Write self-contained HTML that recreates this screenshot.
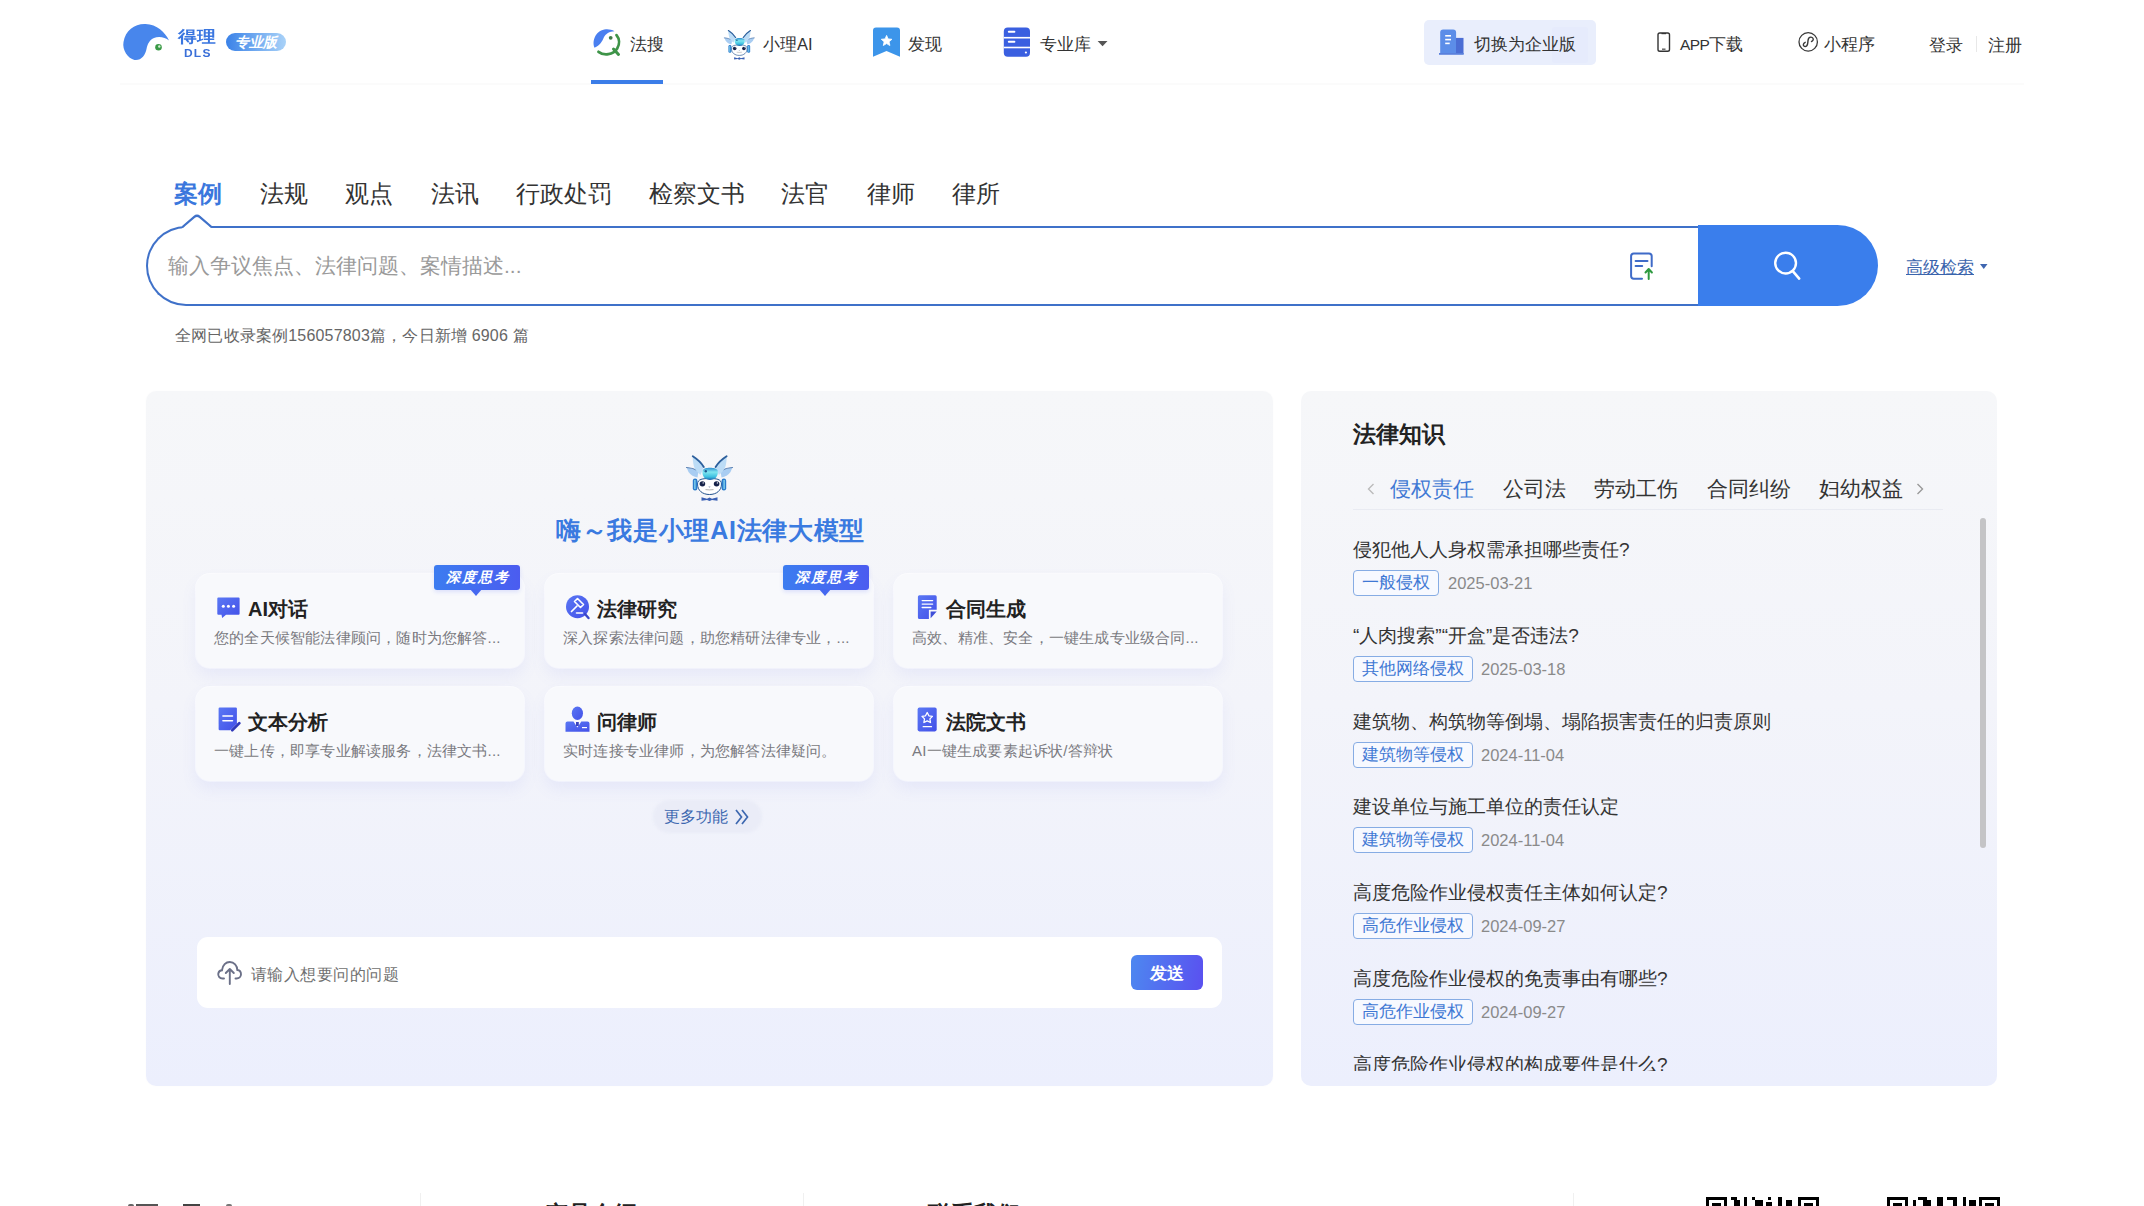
<!DOCTYPE html>
<html><head><meta charset="utf-8">
<style>
*{margin:0;padding:0;box-sizing:border-box}
html,body{width:2144px;height:1206px;overflow:hidden;background:#fff;font-family:"Liberation Sans",sans-serif;color:#333}
.a{position:absolute;white-space:nowrap}
svg.a{overflow:visible}
.nav{font-size:16.5px;color:#333;line-height:20px}
.tab{font-size:24px;color:#333;line-height:30px}
.card{position:absolute;width:328px;height:94px;border-radius:14px;background:#f8f9fc;box-shadow:0 8px 16px rgba(110,120,230,0.09),0 0 0 1px rgba(255,255,255,0.7)}
.ct{position:absolute;left:52px;top:22px;font-size:20px;font-weight:bold;color:#222;line-height:26px}
.cd{position:absolute;left:18px;top:54px;font-size:15px;color:#7a7a80;line-height:20px;letter-spacing:0.2px}
.ci{position:absolute;left:0;top:0;overflow:visible}
.badge{position:absolute;left:238px;top:-9px;width:86px;height:25px;border-radius:3px;background:linear-gradient(90deg,#3c7cf0,#4b5cf0);color:#fff;font-size:14px;font-weight:bold;font-style:italic;text-align:center;line-height:25px;letter-spacing:2px;text-indent:1px;box-shadow:0 2px 4px rgba(70,90,240,0.15)}
.badge:after{content:"";position:absolute;left:36px;bottom:-6px;border-left:6px solid transparent;border-right:6px solid transparent;border-top:7px solid #4568f0}
.kt{position:absolute;left:52px;font-size:19px;color:#333;line-height:24px}
.tag{position:absolute;left:52px;height:26px;border:1px solid #86ace4;border-radius:4px;color:#3f78d4;font-size:17px;font-weight:500;line-height:24px;padding:0 8px;background:#f7f9ff}
.dt{position:absolute;font-size:16.5px;color:#8a8a8a;line-height:20px}
</style></head>
<body>
<svg width="0" height="0" style="position:absolute"><defs><linearGradient id="gem" x1="0" y1="0" x2="0" y2="1"><stop offset="0" stop-color="#2f8fd0"/><stop offset="0.35" stop-color="#7fe6f0"/><stop offset="0.75" stop-color="#3cbfe0"/><stop offset="1" stop-color="#1c62b0"/></linearGradient><g id="masc">
  
  <path d="M16.5,27.5 C20,27.5 25,29 28.5,31 L27.5,37.5 C24,37 20.5,35 18.5,32 Z" fill="#a9cdf2"/>
  <path d="M16.5,27.5 C20,27.5 25,29 28.5,31" fill="none" stroke="#5a7fb0" stroke-width="1.2" stroke-linecap="round"/>
  <path d="M62.5,27.5 C59,27.5 54,29 50.5,31 L51.5,37.5 C55,37 58.5,35 60.5,32 Z" fill="#a9cdf2"/>
  <path d="M62.5,27.5 C59,27.5 54,29 50.5,31" fill="none" stroke="#5a7fb0" stroke-width="1.2" stroke-linecap="round"/>
  <path d="M22.8,16.3 C27,19 31,22.5 33.8,27 L30.5,35 C27,32 24.5,29 23.8,26 C23,22.5 22.6,19 22.8,16.3 Z" fill="#bcdcf6"/>
  <path d="M22.8,16.3 C27,19 31,22.5 33.8,27" fill="none" stroke="#2c5f9c" stroke-width="1.9" stroke-linecap="round"/>
  <path d="M56.6,16.3 C52.4,19 48.4,22.5 45.6,27 L48.9,35 C52.4,32 54.9,29 55.6,26 C56.4,22.5 56.8,19 56.6,16.3 Z" fill="#bcdcf6"/>
  <path d="M56.6,16.3 C52.4,19 48.4,22.5 45.6,27" fill="none" stroke="#2c5f9c" stroke-width="1.9" stroke-linecap="round"/>
  <path d="M27.5,44 C27.5,39 33,38.5 39.5,38.5 C46,38.5 51.5,39 51.5,44 C51.5,50.5 46.5,54.5 39.5,54.5 C32.5,54.5 27.5,50.5 27.5,44 Z" fill="#fff" stroke="#22528e" stroke-width="1"/>
  <rect x="22.8" y="38.5" width="4.6" height="12" rx="2.2" fill="#2b7ccc"/>
  <rect x="24.3" y="40" width="1.2" height="9" fill="#8fe0f4"/>
  <rect x="51.6" y="38.5" width="4.6" height="12" rx="2.2" fill="#2b7ccc"/>
  <rect x="53.5" y="40" width="1.2" height="9" fill="#8fe0f4"/>
  <path d="M32.5,31 C33,28.5 36,27.8 40,27.8 C44,27.8 47,28.5 47.8,31 C48.5,36 45,40 40,40 C35,40 31.8,36 32.5,31 Z" fill="url(#gem)"/>
  <circle cx="35.8" cy="31.3" r="1.2" fill="#1e5a90"/>
  <ellipse cx="32.4" cy="43.8" rx="2.8" ry="2.6" fill="#16224a"/>
  <ellipse cx="46.6" cy="43.8" rx="2.8" ry="2.6" fill="#16224a"/>
  <circle cx="33.2" cy="42.9" r="0.7" fill="#fff"/><circle cx="47.4" cy="42.9" r="0.7" fill="#fff"/>
  <path d="M38.3,46.6 L40.7,46.6 L39.5,47.8 Z" fill="#8a9ab8"/>
  <path d="M35.5,49.6 Q39.5,50.2 43.5,49.6" fill="none" stroke="#666" stroke-width="0.5"/>
  <path d="M31.5,57.3 L37,58.8 L39.5,57.5 L42,58.8 L47.5,57.3 L47.5,60.8 L42,60 L39.5,61 L37,60 L31.5,60.8 Z" fill="#3a60b4"/>
</g></defs></svg>
<!-- header line -->
<div class="a" style="left:120px;top:83px;width:1904px;height:2px;background:#fbfbfb"></div>

<!-- logo -->
<svg class="a" style="left:115px;top:15px" width="60" height="50" viewBox="0 0 60 50">
  <path d="M10.5,45 C4,43.5 -2,35 -0.5,27 C1.5,15 11,8.5 21.5,9 C33,9.5 41,17 45,25.5 C41.5,22.5 35,21 30,23 C25.5,25 23.5,29 22.5,34 C21.5,40 17,46 10.5,45 Z" fill="#4886ec" transform="translate(9,0)"/>
  <circle cx="43.5" cy="32.3" r="3.3" fill="#3a9a46"/>
  <circle cx="44.3" cy="31.5" r="1.2" fill="#d8f0d8"/>
</svg>
<div class="a" style="left:178px;top:29px;font-size:16px;font-weight:900;color:#3a76e0;line-height:16px;transform:scaleX(1.17);transform-origin:0 0">得理</div>
<div class="a" style="left:184px;top:47.5px;font-size:12px;font-weight:bold;color:#3a6fd8;line-height:12px;letter-spacing:1.2px;transform:scaleY(0.85);transform-origin:0 0">DLS</div>
<div class="a" style="left:226px;top:33px;width:60px;height:18px;border-radius:9px;background:linear-gradient(90deg,#3a82e8,#a9d2f8);color:#fff;font-size:14px;font-style:italic;font-weight:900;text-align:center;line-height:18px">专业版</div>

<!-- nav: 法搜 -->
<svg class="a" style="left:590px;top:26px" width="34" height="32" viewBox="590 26 34 32">
  <path d="M594.5,47.8 C591.5,40 596.5,30 606,29.3 C609,29.1 612,29.8 614.5,31.2 C609.5,31.5 605.5,33.5 603.8,37.5 C602.2,41.3 600,45.5 594.5,47.8 Z" fill="#4a7ff0"/>
  <path d="M598.5,51.8 C604,56 613,55 617.2,48.5 C619.8,44.2 619.5,38.8 616.5,35.2" fill="none" stroke="#3e9448" stroke-width="2.8" stroke-linecap="round"/>
  <path d="M613.5,49 L618.5,54.5" stroke="#3e9448" stroke-width="3" stroke-linecap="round"/>
  <circle cx="610.7" cy="37.8" r="1.9" fill="#3e7a48"/>
</svg>
<div class="a nav" style="left:630px;top:34px">法搜</div>
<div class="a" style="left:591px;top:80px;width:72px;height:4px;background:#3b7de8"></div>

<!-- nav: 小理AI -->
<svg class="a" style="left:723.6px;top:29.7px" width="30.6" height="30" viewBox="16 15.5 47 46"><use href="#masc"/></svg>
<div class="a nav" style="left:763px;top:34px">小理AI</div>

<!-- nav: 发现 -->
<svg class="a" style="left:870px;top:25px" width="34" height="34" viewBox="870 25 34 34">
  <path d="M876,27.6 L897,27.6 Q900,27.6 900,30.6 L900,56.7 L886.5,51 L873,56.7 L873,30.6 Q873,27.6 876,27.6 Z" fill="#3c95ea"/>
  <path d="M886.60,35.40 L888.13,38.90 L891.93,39.27 L889.07,41.80 L889.89,45.53 L886.60,43.60 L883.31,45.53 L884.13,41.80 L881.27,39.27 L885.07,38.90 Z" fill="#fff" stroke="#fff" stroke-width="0.8" stroke-linejoin="round"/>
</svg>
<div class="a nav" style="left:908px;top:34px">发现</div>

<!-- nav: 专业库 -->
<svg class="a" style="left:1000px;top:25px" width="34" height="34" viewBox="1000 25 34 34">
  <rect x="1003.8" y="27.6" width="26.2" height="29.1" rx="4" fill="#3a5fe0"/>
  <rect x="1003.8" y="36.9" width="26.2" height="1.6" fill="#fff"/>
  <rect x="1003.8" y="46.7" width="26.2" height="1.6" fill="#fff"/>
  <rect x="1007.8" y="30.8" width="7.6" height="2" rx="1" fill="#fff"/>
  <rect x="1007.8" y="40.8" width="7.6" height="2" rx="1" fill="#fff"/>
  <circle cx="1025.9" cy="52.5" r="1.1" fill="#fff"/>
</svg>
<div class="a nav" style="left:1040px;top:34px">专业库</div>
<svg class="a" style="left:1096px;top:40px" width="14" height="8" viewBox="0 0 14 8"><path d="M1.6,1 L11.5,1 L6.55,6.2 Z" fill="#555"/></svg>

<!-- 切换为企业版 -->
<div class="a" style="left:1424px;top:20px;width:172px;height:45px;border-radius:5px;background:#e9eefc"></div>
<div class="a" style="left:1552px;top:27px;width:36px;height:36px;border-radius:3px;background:#e4e9fb;opacity:0.6"></div>
<svg class="a" style="left:1436px;top:27px" width="30" height="30" viewBox="1436 27 30 30">
  <path d="M1440.2,54 L1440.2,32.5 Q1440.2,29.5 1443.2,29.5 L1453.1,29.5 Q1456.1,29.5 1456.1,32.5 L1456.1,54 Z" fill="#5c8de8"/>
  <rect x="1456" y="37.9" width="7.5" height="16.1" fill="#4b6dd4"/>
  <rect x="1439" y="53" width="24.7" height="1.8" fill="#5a80dc"/>
  <rect x="1445.2" y="35" width="5.8" height="1.6" fill="#fff"/>
  <rect x="1445.2" y="38.8" width="5.8" height="1.6" fill="#fff"/>
  <rect x="1445.2" y="42.6" width="4.5" height="1.6" fill="#fff"/>
</svg>
<div class="a nav" style="left:1474px;top:34px">切换为企业版</div>

<!-- APP下载 -->
<svg class="a" style="left:1655px;top:30px" width="18" height="24" viewBox="1655 30 18 24">
  <rect x="1658" y="33" width="11.5" height="18.2" rx="1.8" fill="none" stroke="#333" stroke-width="1.4"/>
  <rect x="1661.5" y="33" width="4.5" height="1.2" fill="#333"/>
  <rect x="1662" y="48.6" width="3.5" height="1.1" fill="#333"/>
</svg>
<div class="a nav" style="left:1680px;top:34px"><span style="font-size:15.5px;letter-spacing:-0.6px">APP</span>下载</div>

<!-- 小程序 -->
<svg class="a" style="left:1795px;top:29px" width="26" height="26" viewBox="1795 29 26 26">
  <circle cx="1808.2" cy="41.9" r="9.2" fill="none" stroke="#3a3a3a" stroke-width="1.3"/>
  <path d="M1805.2,42.3 C1803.2,43.2 1802.6,45.8 1804.4,46.4 C1806.4,47 1807.6,45.2 1807.8,42.6 L1808,40.6 C1808.2,38.2 1809.4,37 1811,37.1 C1812.8,37.2 1813.8,39 1812.9,40.4 C1812.5,41 1812,41.3 1811.5,41.5" fill="none" stroke="#3a3a3a" stroke-width="1.4" stroke-linecap="round"/>
</svg>
<div class="a nav" style="left:1824px;top:34px">小程序</div>
<div class="a nav" style="left:1929px;top:35px">登录</div>
<div class="a" style="left:1976px;top:36px;width:1px;height:16px;background:#e8e8e8"></div>
<div class="a nav" style="left:1988px;top:35px">注册</div>

<!-- tabs -->
<div class="a tab" style="left:174px;top:179px;color:#3a77dd;font-weight:bold">案例</div>
<div class="a tab" style="left:260px;top:179px">法规</div>
<div class="a tab" style="left:345px;top:179px">观点</div>
<div class="a tab" style="left:431px;top:179px">法讯</div>
<div class="a tab" style="left:516px;top:179px">行政处罚</div>
<div class="a tab" style="left:649px;top:179px">检察文书</div>
<div class="a tab" style="left:781px;top:179px">法官</div>
<div class="a tab" style="left:867px;top:179px">律师</div>
<div class="a tab" style="left:952px;top:179px">律所</div>

<!-- search box -->
<div class="a" style="left:146px;top:225.6px;width:1600px;height:80.4px;border:2.5px solid #3f71c9;border-right:none;border-radius:40px 0 0 40px;background:#fff"></div>
<div class="a" style="left:1698px;top:225px;width:180px;height:81px;border-radius:0 40.5px 40.5px 0;background:#3a7eec"></div>
<svg class="a" style="left:170px;top:205px" width="60" height="30" viewBox="170 205 60 30">
  <path d="M181,229.5 L197,215 L213,229.5 Z" fill="#fff"/>
  <path d="M182.5,227 L194.3,216.9 Q197,214.6 199.7,216.9 L211.5,227" fill="none" stroke="#3f71c9" stroke-width="2.2" stroke-linejoin="round"/>
</svg>
<div class="a" style="left:168px;top:252px;font-size:21px;color:#9a9a9a;line-height:28px">输入争议焦点、法律问题、案情描述...</div>
<!-- upload doc icon -->
<svg class="a" style="left:1625px;top:248px" width="32" height="36" viewBox="1625 248 32 36">
  <path d="M1642,278.7 L1633.8,278.7 Q1631.1,278.7 1631.1,276 L1631.1,256.2 Q1631.1,253.5 1633.8,253.5 L1649,253.5 Q1651.7,253.5 1651.7,256.2 L1651.7,266.2" fill="none" stroke="#3f6bc8" stroke-width="2" stroke-linecap="round"/>
  <path d="M1635.6,261.1 L1647.5,261.1 M1635.6,265.9 L1642.2,265.9" stroke="#3f6bc8" stroke-width="2" stroke-linecap="round"/>
  <path d="M1648.7,279 L1648.7,269.5 M1645.5,272.5 L1648.7,269 L1651.9,272.5" fill="none" stroke="#2e9a40" stroke-width="2" stroke-linecap="round" stroke-linejoin="round"/>
</svg>
<!-- search icon -->
<svg class="a" style="left:1766px;top:244px" width="40" height="40" viewBox="1766 244 40 40">
  <circle cx="1785.6" cy="263.1" r="10.4" fill="none" stroke="#fff" stroke-width="2.4"/>
  <path d="M1793.2,271.6 L1799.2,278.6" stroke="#fff" stroke-width="2.6" stroke-linecap="round"/>
</svg>
<div class="a" style="left:1906px;top:257px;font-size:17px;color:#3a64ac;line-height:22px;text-decoration:underline;text-underline-offset:1px">高级检索</div>
<svg class="a" style="left:1978px;top:262px" width="12" height="10" viewBox="0 0 12 10"><path d="M2,2 L9.5,2 L5.75,7 Z" fill="#3f66b0"/></svg>
<div class="a" style="left:175px;top:326px;font-size:16px;color:#666;line-height:20px;letter-spacing:0.18px">全网已收录案例156057803篇，今日新增 6906 篇</div>

<!-- left panel -->
<div class="a" style="left:146px;top:391px;width:1127px;height:695px;border-radius:10px;background:linear-gradient(180deg,#f6f7f9 0%,#f3f4fa 45%,#eceffd 100%);box-shadow:0 0 3px rgba(0,0,0,0.02)"></div>
<!-- mascot -->
<svg class="a" style="left:670px;top:440px" width="80" height="70" viewBox="0 0 80 70"><use href="#masc"/></svg>
<div class="a" style="left:556px;top:512px;font-size:25px;font-weight:bold;color:#3a7ae0;line-height:36px;letter-spacing:0.7px">嗨～我是小理AI法律大模型</div>

<!-- cards -->
<div class="card" style="left:196px;top:574px">
  <svg class="ci" width="60" height="60" viewBox="196 574 60 60">
    <defs><linearGradient id="g1" x1="0" y1="0" x2="1" y2="1"><stop offset="0" stop-color="#5a78f4"/><stop offset="1" stop-color="#4350e8"/></linearGradient></defs>
    <path d="M218.3,597.5 L238.6,597.5 Q239.6,597.5 239.6,598.5 L239.6,613.7 Q239.6,614.7 238.6,614.7 L226,614.7 L222.2,618 L221.5,614.7 L218.3,614.7 Q217.3,614.7 217.3,613.7 L217.3,598.5 Q217.3,597.5 218.3,597.5 Z" fill="url(#g1)"/>
    <circle cx="223.3" cy="606.3" r="1.5" fill="#fff"/><circle cx="228.4" cy="606.3" r="1.5" fill="#fff"/><circle cx="233.6" cy="606.3" r="1.5" fill="#fff"/>
  </svg>
  <div class="ct">AI对话</div><div class="cd">您的全天候智能法律顾问，随时为您解答...</div><div class="badge">深度思考</div></div>
<div class="card" style="left:545px;top:574px">
  <svg class="ci" width="60" height="60" viewBox="545 574 60 60">
    <circle cx="577.5" cy="606.7" r="11.5" fill="url(#g1)"/>
    <path d="M585,614 L588.5,618" stroke="#3a46c8" stroke-width="2.4" stroke-linecap="round"/>
    <path d="M574.5,601.5 L577.5,598.5 L583.5,604.5 L580.5,607.5 Z" fill="none" stroke="#fff" stroke-width="1.6" stroke-linejoin="round"/>
    <path d="M577,606 L571.5,611.5" stroke="#fff" stroke-width="1.7" stroke-linecap="round"/>
    <path d="M576.5,613 L582.5,613" stroke="#fff" stroke-width="1.6" stroke-linecap="round"/>
  </svg>
  <div class="ct">法律研究</div><div class="cd">深入探索法律问题，助您精研法律专业，...</div><div class="badge">深度思考</div></div>
<div class="card" style="left:894px;top:574px">
  <svg class="ci" width="60" height="60" viewBox="894 574 60 60">
    <path d="M919.4,595.2 L935.2,595.2 Q936.7,595.2 936.7,596.7 L936.7,609.8 L928.9,609.8 L928.9,618.9 L919.4,618.9 Q917.9,618.9 917.9,617.4 L917.9,596.7 Q917.9,595.2 919.4,595.2 Z" fill="url(#g1)"/>
    <path d="M930.6,611.5 L936.7,611.5 L930.6,618.3 Z" fill="#3f4fd8"/>
    <path d="M922.2,600.6 L932.6,600.6 M922.2,604.1 L932.6,604.1 M922.2,607.5 L930.8,607.5" stroke="#fff" stroke-width="1.4" stroke-linecap="round"/>
  </svg>
  <div class="ct">合同生成</div><div class="cd">高效、精准、安全，一键生成专业级合同...</div></div>
<div class="card" style="left:196px;top:687px">
  <svg class="ci" width="60" height="60" viewBox="196 687 60 60">
    <path d="M219.8,707.6 L235.7,707.6 Q236.9,707.6 236.9,708.8 L236.9,723.5 L230.2,730.2 L219.8,730.2 Q218.6,730.2 218.6,729 L218.6,708.8 Q218.6,707.6 219.8,707.6 Z" fill="url(#g1)"/>
    <path d="M222.9,715.9 L232.5,715.9 M222.9,720.7 L232.5,720.7" stroke="#fff" stroke-width="1.5" stroke-linecap="round"/>
    <path d="M232.3,730.3 L239.3,723.3" stroke="#3038b8" stroke-width="2.8" stroke-linecap="round"/>
    <path d="M233,731.8 L240.8,724" stroke="#f8f9fc" stroke-width="0.6"/>
  </svg>
  <div class="ct">文本分析</div><div class="cd">一键上传，即享专业解读服务，法律文书...</div></div>
<div class="card" style="left:545px;top:687px">
  <svg class="ci" width="60" height="60" viewBox="545 687 60 60">
    <ellipse cx="577.4" cy="713.3" rx="5.6" ry="6.8" fill="url(#g1)"/>
    <path d="M567.5,721.6 L573.5,721.6 L577.4,727.5 L581.3,721.6 L587.5,721.6 Q589.5,721.6 589.5,723.6 L589.5,731.8 L565.5,731.8 L565.5,723.6 Q565.5,721.6 567.5,721.6 Z" fill="url(#g1)"/>
    <rect x="576" y="722" width="2.8" height="4" fill="#3a44c0"/>
    <rect x="582" y="727" width="5" height="1.2" fill="#fff"/>
  </svg>
  <div class="ct">问律师</div><div class="cd">实时连接专业律师，为您解答法律疑问。</div></div>
<div class="card" style="left:894px;top:687px">
  <svg class="ci" width="60" height="60" viewBox="894 687 60 60">
    <rect x="917.6" y="707.6" width="19.1" height="23.8" rx="1.8" fill="url(#g1)"/>
    <path d="M927.2,712.5 L928.9,715.8 L932.4,716.4 L929.9,718.9 L930.5,722.5 L927.2,720.8 L923.9,722.5 L924.5,718.9 L922,716.4 L925.5,715.8 Z" fill="none" stroke="#fff" stroke-width="1.3" stroke-linejoin="round"/>
    <path d="M923.2,726.7 L931.5,726.7" stroke="#fff" stroke-width="1.3" stroke-linecap="round"/>
  </svg>
  <div class="ct">法院文书</div><div class="cd">AI一键生成要素起诉状/答辩状</div></div>

<div class="a" style="left:653px;top:800px;width:109px;height:33px;border-radius:16px;background:#eaecf7;filter:blur(1px)"></div>
<div class="a" style="left:664px;top:806px;font-size:16px;color:#3d68b0;line-height:22px">更多功能</div>
<svg class="a" style="left:733px;top:806px" width="20" height="22" viewBox="733 806 20 22">
  <path d="M736,810 L741.5,817 L736,824 M742,810 L747.5,817 L742,824" fill="none" stroke="#3d68b0" stroke-width="1.7" stroke-linejoin="miter"/>
</svg>

<!-- input -->
<div class="a" style="left:197px;top:937px;width:1025px;height:71px;border-radius:11px;background:#fff"></div>
<svg class="a" style="left:214px;top:957px" width="32" height="32" viewBox="214 957 32 32">
  <path d="M224,978.5 L222.5,978.5 C219.5,978.5 217.8,976 218.3,973.5 C218.7,971.5 220.2,970.2 222,970.2 C222.5,965 226,962 229.8,962 C234,962 237.3,965.5 237.3,970 C239.5,970.3 241,972 241,974.3 C241,976.8 239,978.5 236.5,978.5 L235.5,978.5" fill="none" stroke="#6b7088" stroke-width="1.9" stroke-linecap="round"/>
  <path d="M229.8,984 L229.8,969 M225.8,973 L229.8,969 L233.8,973" fill="none" stroke="#6b7088" stroke-width="1.9" stroke-linecap="round" stroke-linejoin="round"/>
</svg>
<div class="a" style="left:251px;top:964px;font-size:16px;color:#707070;line-height:22px;letter-spacing:0.45px">请输入想要问的问题</div>
<div class="a" style="left:1131px;top:955px;width:72px;height:35px;border-radius:6px;background:linear-gradient(100deg,#4d88f0,#5a50f0);color:#fff;font-size:17px;font-weight:bold;text-align:center;line-height:38px">发送</div>

<!-- right panel -->
<div class="a" style="left:1301px;top:391px;width:696px;height:695px;border-radius:10px;background:linear-gradient(180deg,#f6f7f9 0%,#f3f4fa 45%,#eceffd 100%);overflow:hidden">
  <div class="a" style="left:52px;top:28px;font-size:23px;font-weight:bold;color:#222;line-height:30px">法律知识</div>
  <svg class="a" style="left:64px;top:90px" width="12" height="16" viewBox="0 0 12 16"><path d="M8.5,3 L3.5,8 L8.5,13" fill="none" stroke="#bbb" stroke-width="1.4"/></svg>
  <div class="a" style="left:89px;top:84px;font-size:21px;color:#3f78d4;line-height:28px">侵权责任</div>
  <div class="a" style="left:202px;top:84px;font-size:21px;color:#333;line-height:28px">公司法</div>
  <div class="a" style="left:293px;top:84px;font-size:21px;color:#333;line-height:28px">劳动工伤</div>
  <div class="a" style="left:406px;top:84px;font-size:21px;color:#333;line-height:28px">合同纠纷</div>
  <div class="a" style="left:518px;top:84px;font-size:21px;color:#333;line-height:28px">妇幼权益</div>
  <svg class="a" style="left:613px;top:90px" width="12" height="16" viewBox="0 0 12 16"><path d="M3.5,3 L8.5,8 L3.5,13" fill="none" stroke="#999" stroke-width="1.4"/></svg>
  <div class="a" style="left:52px;top:118px;width:590px;height:1px;background:#e9ebf2"></div>
  <div class="a" style="left:679px;top:127px;width:6px;height:330px;border-radius:3px;background:#c4c4c6"></div>

  <div class="a" style="left:0;top:120px;width:680px;height:560px;overflow:hidden">
        <div class="kt" style="top:27px">侵犯他人人身权需承担哪些责任?</div>
    <div class="tag" style="top:59px">一般侵权</div><div class="dt" style="left:147px;top:62px">2025-03-21</div>
    <div class="kt" style="top:113px">“人肉搜索”“开盒”是否违法?</div>
    <div class="tag" style="top:145px">其他网络侵权</div><div class="dt" style="left:180px;top:148px">2025-03-18</div>
    <div class="kt" style="top:199px">建筑物、构筑物等倒塌、塌陷损害责任的归责原则</div>
    <div class="tag" style="top:231px">建筑物等侵权</div><div class="dt" style="left:180px;top:234px">2024-11-04</div>
    <div class="kt" style="top:284px">建设单位与施工单位的责任认定</div>
    <div class="tag" style="top:316px">建筑物等侵权</div><div class="dt" style="left:180px;top:319px">2024-11-04</div>
    <div class="kt" style="top:370px">高度危险作业侵权责任主体如何认定?</div>
    <div class="tag" style="top:402px">高危作业侵权</div><div class="dt" style="left:180px;top:405px">2024-09-27</div>
    <div class="kt" style="top:456px">高度危险作业侵权的免责事由有哪些?</div>
    <div class="tag" style="top:488px">高危作业侵权</div><div class="dt" style="left:180px;top:491px">2024-09-27</div>
    <div class="kt" style="top:542px">高度危险作业侵权的构成要件是什么?</div>
  </div>
</div>

<!-- footer (cut off) -->
<div class="a" style="left:128px;top:1204px;width:6px;height:2px;background:#666;border-radius:2px 2px 0 0"></div><div class="a" style="left:136px;top:1204px;width:22px;height:2px;background:#555"></div><div class="a" style="left:183px;top:1204px;width:17px;height:2px;background:#444"></div><div class="a" style="left:226px;top:1204px;width:6px;height:2px;background:#777;border-radius:3px 3px 0 0"></div>
<div class="a" style="left:420px;top:1193px;width:1px;height:13px;background:#f0f0f0"></div>
<div class="a" style="left:545px;top:1199px;font-size:23px;font-weight:bold;color:#222;line-height:30px">产品介绍</div>
<div class="a" style="left:803px;top:1193px;width:1px;height:13px;background:#f0f0f0"></div>
<div class="a" style="left:928px;top:1199px;font-size:23px;font-weight:bold;color:#222;line-height:30px">联系我们</div>
<div class="a" style="left:1573px;top:1193px;width:1px;height:13px;background:#f0f0f0"></div>
<svg class="a" style="left:1706px;top:1197px" width="113" height="9" viewBox="0 0 113 9">
  <rect x="0" y="0" width="21" height="3" fill="#000"/><rect x="0" y="0" width="3" height="9" fill="#000"/><rect x="18" y="0" width="3" height="9" fill="#000"/><rect x="6" y="6" width="9" height="3" fill="#000"/>
  <rect x="92" y="0" width="21" height="3" fill="#000"/><rect x="92" y="0" width="3" height="9" fill="#000"/><rect x="110" y="0" width="3" height="9" fill="#000"/><rect x="98" y="6" width="9" height="3" fill="#000"/>
  <rect x="25" y="0" width="6" height="3" fill="#000"/><rect x="28" y="3" width="6" height="6" fill="#000"/><rect x="38" y="0" width="3" height="9" fill="#000"/><rect x="46" y="0" width="3" height="3" fill="#000"/><rect x="49" y="3" width="8" height="6" fill="#000"/><rect x="62" y="0" width="3" height="3" fill="#000"/><rect x="60" y="5" width="6" height="4" fill="#000"/><rect x="72" y="0" width="4" height="9" fill="#000"/><rect x="80" y="3" width="6" height="6" fill="#000"/>
</svg>
<svg class="a" style="left:1887px;top:1197px" width="113" height="9" viewBox="0 0 113 9">
  <rect x="0" y="0" width="21" height="3" fill="#000"/><rect x="0" y="0" width="3" height="9" fill="#000"/><rect x="18" y="0" width="3" height="9" fill="#000"/><rect x="6" y="6" width="9" height="3" fill="#000"/>
  <rect x="92" y="0" width="21" height="3" fill="#000"/><rect x="92" y="0" width="3" height="9" fill="#000"/><rect x="110" y="0" width="3" height="9" fill="#000"/><rect x="98" y="6" width="9" height="3" fill="#000"/>
  <rect x="26" y="3" width="3" height="6" fill="#000"/><rect x="31" y="0" width="9" height="3" fill="#000"/><rect x="36" y="3" width="8" height="6" fill="#000"/><rect x="50" y="0" width="6" height="9" fill="#000"/><rect x="60" y="0" width="10" height="3" fill="#000"/><rect x="66" y="3" width="4" height="6" fill="#000"/><rect x="76" y="0" width="3" height="9" fill="#000"/><rect x="82" y="3" width="7" height="6" fill="#000"/>
</svg>
</body></html>
